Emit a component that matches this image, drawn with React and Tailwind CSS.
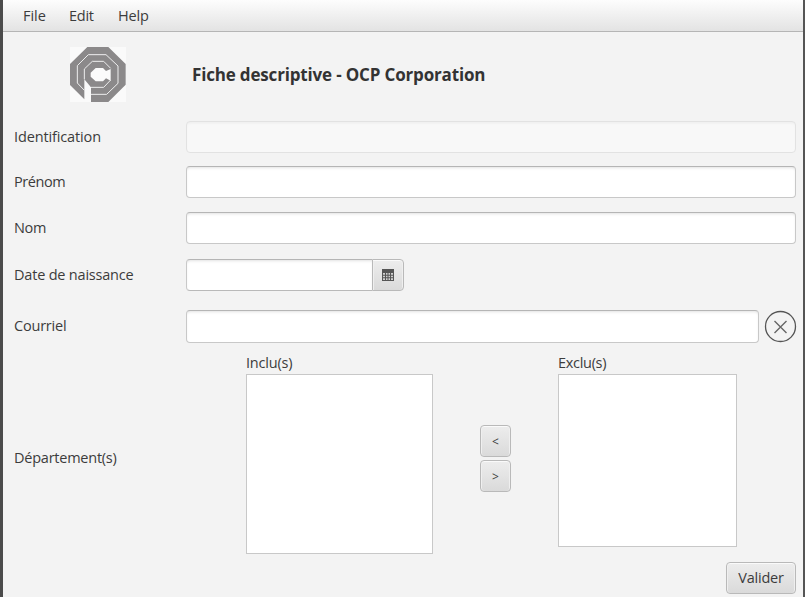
import React from "react";

const input =
  "box-border shrink-0 rounded-[4px] border border-[#c8c8c8] border-t-[#b5b5b5] bg-white shadow-[inset_0_2px_3px_-1px_#e2e2e2] outline-none";
const button =
  "flex shrink-0 items-center justify-center rounded-[4px] border border-[#b9b9b9] bg-linear-to-b from-[#ededed] to-[#dadada] shadow-[inset_0_1px_0_#fafafa,inset_1px_0_0_#efefef,inset_-1px_0_0_#efefef]";

function Logo() {
  return (
    <svg width="56" height="55" viewBox="0 0 168 165" className="bg-[#fafafa]">
      <path fill="#8b898a" d="M52 0H115L167 51V113L115 165H63V121L43 97V157L0 114V51Z" />
      <path fill="#fbfbfb" d="M77 63H99L108 72L122 66V101L108 94L99 103H77L62 89V77Z" />
      <path
        fill="none"
        stroke="#eeeeee"
        strokeWidth="3"
        d="M43 130L22 108V56L55 23H108L144 57V109L110 142H63M43 97V66L67 43H101L122 64M122 99L101 121H63"
      />
    </svg>
  );
}

function Row({ label, tracking, className, children }) {
  return (
    <div className={"flex items-center " + className}>
      <div className="w-[172px] shrink-0">
        <span className={"block " + tracking}>{label}</span>
      </div>
      {children}
    </div>
  );
}

export default function App() {
  return (
    <div className="box-border h-[597px] w-[805px] overflow-hidden border-r-2 border-l-3 border-r-[#555] border-l-[#4b4b4b] bg-[#f3f3f3] font-['Open_Sans','Noto_Sans',sans-serif] text-[14.5px] leading-5 whitespace-nowrap text-[#3c3c3c]">
      <nav className="flex h-8 items-center border-b border-[#b5b5b5] bg-linear-to-b from-[#fdfdfd] to-[#e3e3e3] pl-5">
        <span className="w-[46px] tracking-[-0.05px]">File</span>
        <span className="w-[49px] tracking-[-0.25px]">Edit</span>
        <span className="tracking-[-0.2px]">Help</span>
      </nav>
      <main className="flex flex-col pr-[7px] pl-[11px]">
        <header className="flex h-[89px] items-start pt-[15px] pl-14">
          <Logo />
          <h1 className="mt-[18px] ml-[66px] text-[17px] font-bold tracking-[-0.17px] text-[#333]">
            Fiche descriptive - OCP Corporation
          </h1>
        </header>
        <Row label="Identification" tracking="tracking-[-0.13px]" className="h-8">
          <input
            disabled
            className="h-8 w-[610px] rounded-[4px] border border-[#e2e2e2] bg-[#f8f8f8] shadow-[inset_0_2px_3px_-1px_#ececec]"
          />
        </Row>
        <Row label="Prénom" tracking="tracking-[-0.45px]" className="mt-[13px] h-8">
          <input className={input + " h-8 w-[610px]"} />
        </Row>
        <Row label="Nom" tracking="tracking-[-0.3px]" className="mt-[14px] h-8">
          <input className={input + " h-8 w-[610px]"} />
        </Row>
        <Row label="Date de naissance" tracking="tracking-[-0.2px]" className="mt-[15px] h-8">
          <input className={input + " h-8 w-[186px] rounded-r-none border-r-0 border-b-[#b9b9b9]"} />
          <button className={button + " h-8 w-8 rounded-l-none"}>
            <svg width="12" height="12" viewBox="0 0 12 12">
              <path fill="#555" d="M0 0H12V12H0Z" />
              <path
                fill="#d0d0d0"
                d="M1 4H3V5.7H1ZM4 4H5.5V5.7H4ZM6.5 4H8V5.7H6.5ZM9 4H11V5.7H9ZM1 6.7H3V8.3H1ZM4 6.7H5.5V8.3H4ZM6.5 6.7H8V8.3H6.5ZM9 6.7H11V8.3H9ZM1 9.3H3V11H1ZM4 9.3H5.5V11H4ZM6.5 9.3H8V11H6.5ZM9 9.3H11V11H9Z"
              />
            </svg>
          </button>
        </Row>
        <Row label="Courriel" tracking="pb-0.5 tracking-[-0.2px]" className="mt-[19px] h-[33px]">
          <input className={input + " h-[33px] w-[573px]"} />
          <svg
            className="-mr-px ml-[5px] shrink-0"
            width="33"
            height="33"
            viewBox="0 0 33 33"
            fill="none"
            stroke="#555"
          >
            <circle cx="16.5" cy="16.5" r="15" strokeWidth="1.3" />
            <path strokeWidth="1.4" stroke="#666" d="M10.5 11L22.5 23M22.5 11L10.5 23" />
          </svg>
        </Row>
        <section className="flex h-[219px] items-start">
          <span className="mt-[105px] w-[232px] tracking-[-0.24px]">Département(s)</span>
          <div className="w-[187px] pt-[10px]">
            <span className="block h-[21px] tracking-[-0.2px]">Inclu(s)</span>
            <div className="h-[180px] border border-[#c8c8c8] bg-white" />
          </div>
          <div className="mt-[82px] ml-[47px] flex flex-col gap-[3px] text-xs">
            <button className={button + " h-8 w-[31px] pt-px"}>&lt;</button>
            <button className={button + " h-8 w-[31px] pt-px"}>&gt;</button>
          </div>
          <div className="ml-[47px] w-[179px] pt-[10px]">
            <span className="block h-[21px] tracking-[-0.3px]">Exclu(s)</span>
            <div className="h-[173px] border border-[#c8c8c8] bg-white" />
          </div>
        </section>
        <button className={button + " h-8 w-[70px] self-end tracking-[-0.2px]"}>Valider</button>
      </main>
    </div>
  );
}
